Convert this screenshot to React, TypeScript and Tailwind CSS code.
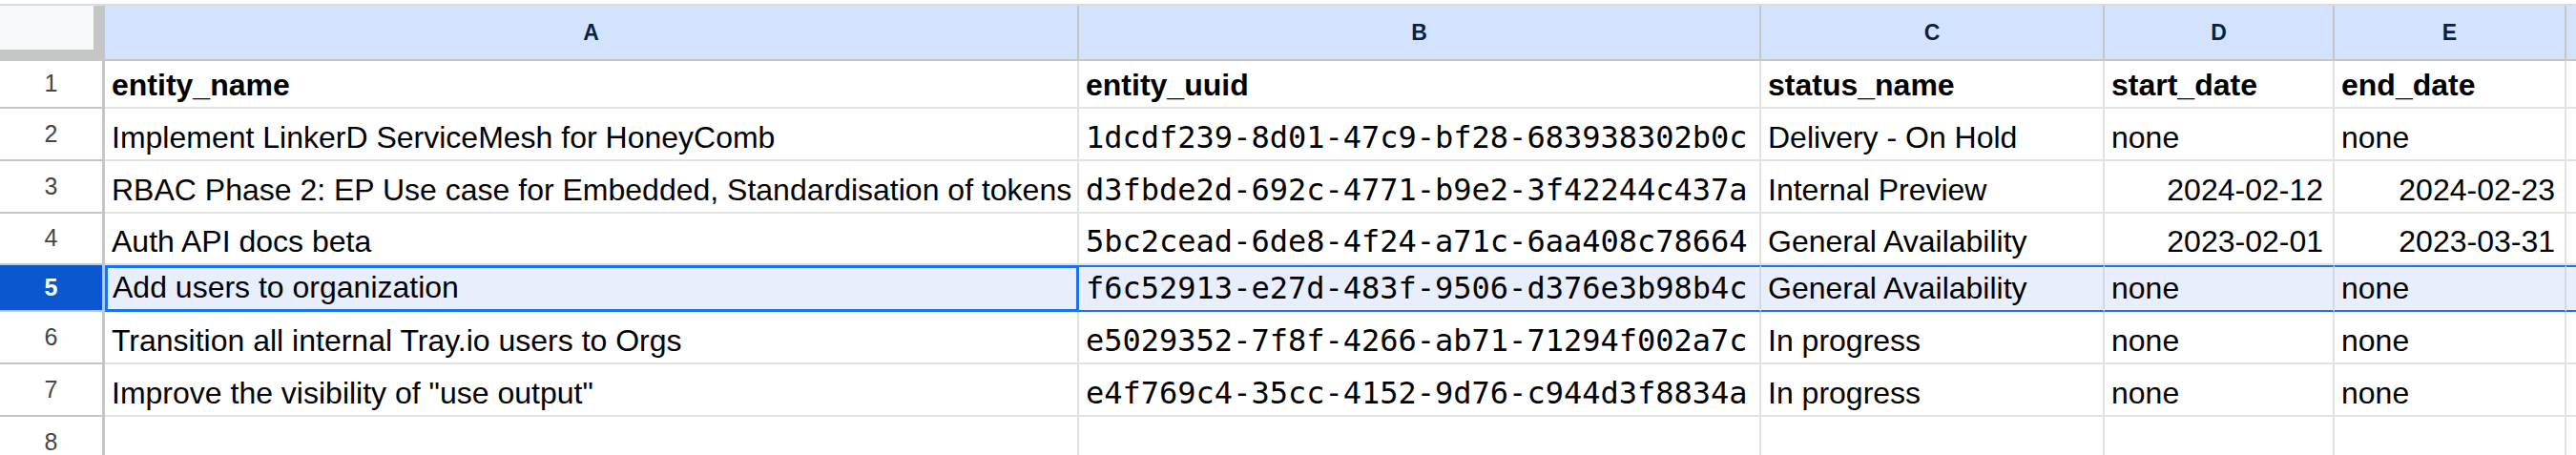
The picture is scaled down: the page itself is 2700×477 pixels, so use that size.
import React from "react";

type Row = {
  n: number;
  h: string;
  cells: string[];
  bold?: boolean;
  selected?: boolean;
};

const cols = [
  { key: "A", w: "w-[1021px]" },
  { key: "B", w: "w-[715px]" },
  { key: "C", w: "w-[360px]" },
  { key: "D", w: "w-[241px]" },
  { key: "E", w: "w-[243px]" },
];

const rows: Row[] = [
  { n: 1, h: "h-[50px]", bold: true, cells: ["entity_name", "entity_uuid", "status_name", "start_date", "end_date"] },
  {
    n: 2,
    h: "h-[55px]",
    cells: ["Implement LinkerD ServiceMesh for HoneyComb", "1dcdf239-8d01-47c9-bf28-683938302b0c", "Delivery - On Hold", "none", "none"],
  },
  {
    n: 3,
    h: "h-[55px]",
    cells: [
      "RBAC Phase 2: EP Use case for Embedded, Standardisation of tokens",
      "d3fbde2d-692c-4771-b9e2-3f42244c437a",
      "Internal Preview",
      "2024-02-12",
      "2024-02-23",
    ],
  },
  {
    n: 4,
    h: "h-[54px]",
    cells: ["Auth API docs beta", "5bc2cead-6de8-4f24-a71c-6aa408c78664", "General Availability", "2023-02-01", "2023-03-31"],
  },
  {
    n: 5,
    h: "h-[49px]",
    selected: true,
    cells: ["Add users to organization", "f6c52913-e27d-483f-9506-d376e3b98b4c", "General Availability", "none", "none"],
  },
  {
    n: 6,
    h: "h-[55px]",
    cells: ["Transition all internal Tray.io users to Orgs", "e5029352-7f8f-4266-ab71-71294f002a7c", "In progress", "none", "none"],
  },
  {
    n: 7,
    h: "h-[55px]",
    cells: ['Improve the visibility of "use output"', "e4f769c4-35cc-4152-9d76-c944d3f8834a", "In progress", "none", "none"],
  },
  { n: 8, h: "h-[55px]", cells: ["", "", "", "", ""] },
];

// dates are numbers in the sheet, so they sit on the right
const isDate = (v: string) => /^\d{4}-\d{2}-\d{2}$/.test(v);

function DataCell({
  w,
  value,
  colIndex,
  bold,
  selected,
}: {
  w: string;
  value: string;
  colIndex: number;
  bold?: boolean;
  selected?: boolean;
}) {
  const mono = colIndex === 1 && !bold;
  const active = selected && colIndex === 0;
  return (
    <div
      className={[
        w,
        "shrink-0 h-full flex items-end overflow-hidden whitespace-nowrap pb-[5px] text-[32px] leading-[36px] text-black",
        isDate(value) ? "justify-end pl-[7px] pr-[10px]" : "justify-start px-[7px]",
        bold ? "font-bold" : "",
        mono ? "font-['DejaVu_Sans_Mono',monospace]" : "",
        active
          ? "border-[3px] border-[#1a73e8] bg-[#e8eefb] pl-[5px]"
          : selected
          ? "border-r-2 border-r-[#d3d8e3] border-t-2 border-b-2 border-t-[#1a73e8] border-b-[#1a73e8] bg-[#e8eefb]"
          : "border-r-2 border-b-2 border-[#e1e3e1] bg-white",
      ].join(" ")}
    >
      {value}
    </div>
  );
}

export default function App() {
  return (
    <div className="w-[2700px] h-[477px] overflow-hidden bg-white font-['Liberation_Sans',Arial,sans-serif]">
      <div className="h-[6px] bg-white border-b-2 border-[#dadce0]" />

      {/* column letters */}
      <div className="flex h-[58px]">
        <div className="w-[110px] shrink-0 h-full bg-[#f8f9fa] border-r-[12px] border-b-[12px] border-[#c4c7c5]" />
        {cols.map((c) => (
          <div
            key={c.key}
            className={`${c.w} shrink-0 h-full flex items-center justify-center bg-[#d3e3fd] border-r-2 border-b-2 border-[#c4c7c5] text-[23px] font-bold text-[#0b1f45]`}
          >
            {c.key}
          </div>
        ))}
        <div className="flex-1 h-full bg-[#d3e3fd] border-b-2 border-[#c4c7c5]" />
      </div>

      {rows.map((r) => (
        <div key={r.n} className={`flex ${r.h}`}>
          <div
            className={[
              "w-[110px] shrink-0 h-full flex items-center justify-center border-r-[3px] border-b-2 border-[#c4c7c5] text-[25px]",
              r.selected ? "bg-[#0b57d0] text-white font-bold" : "bg-white text-[#444746]",
            ].join(" ")}
          >
            {r.n}
          </div>
          {cols.map((c, i) => (
            <DataCell key={c.key} w={c.w} value={r.cells[i]} colIndex={i} bold={r.bold} selected={r.selected} />
          ))}
          <div
            className={
              r.selected
                ? "flex-1 h-full bg-[#e8eefb] border-t-2 border-b-2 border-[#1a73e8]"
                : "flex-1 h-full bg-white border-b-2 border-[#e1e3e1]"
            }
          />
        </div>
      ))}
    </div>
  );
}
